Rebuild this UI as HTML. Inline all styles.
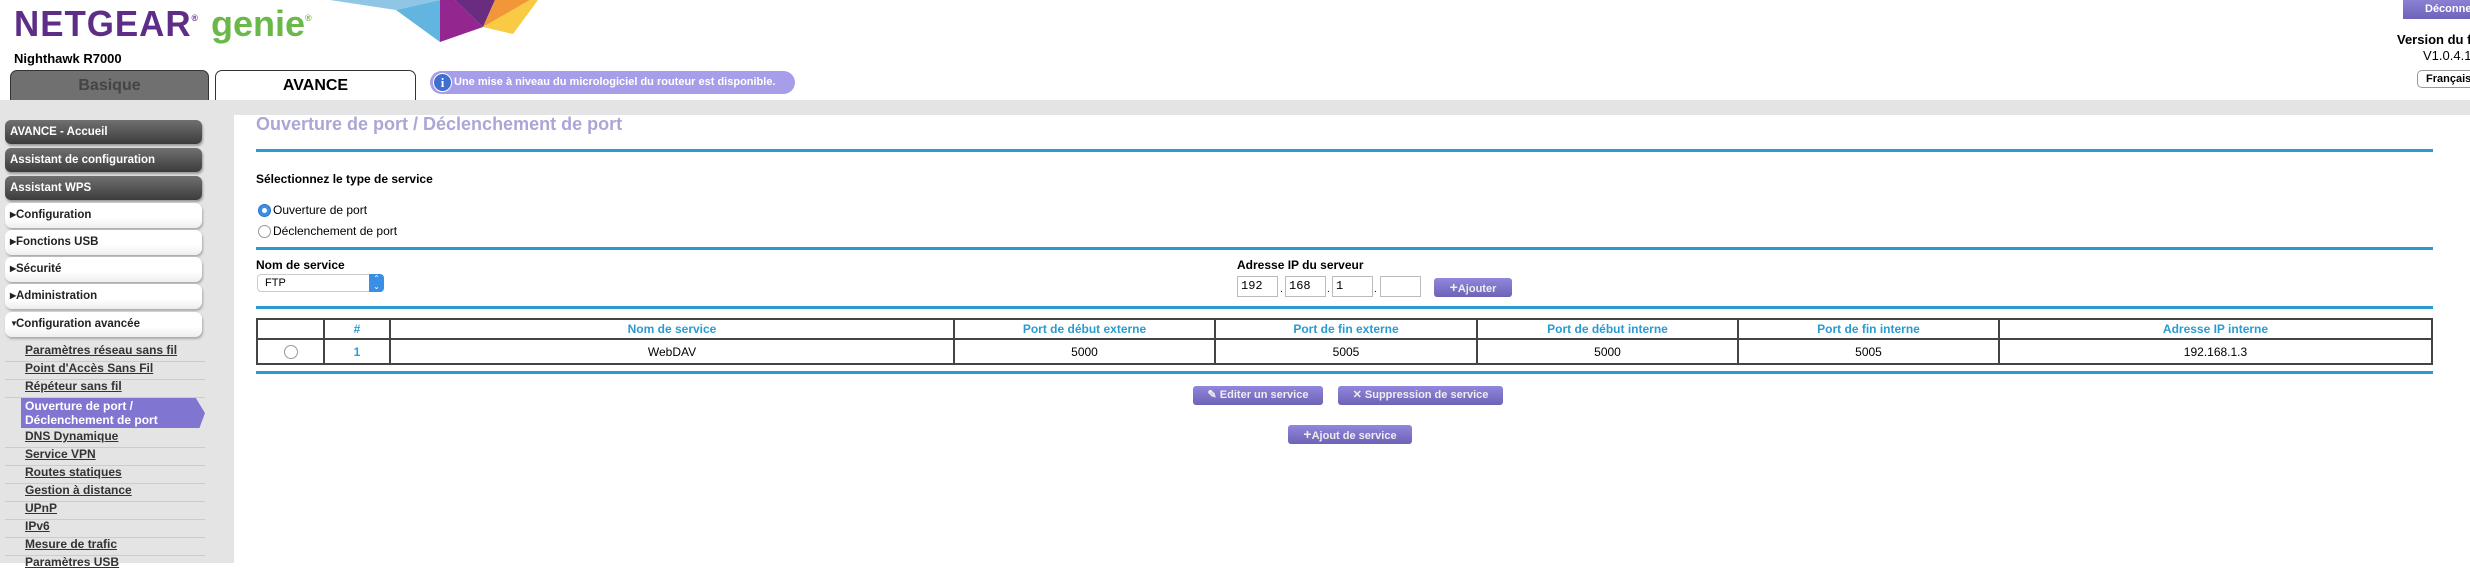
<!DOCTYPE html>
<html><head><meta charset="utf-8"><style>
*{margin:0;padding:0;box-sizing:border-box}
body{width:2470px;height:563px;overflow:hidden;background:#fff;font-family:"Liberation Sans",Arial,sans-serif;position:relative;color:#000}
.a{position:absolute;white-space:nowrap}
.tab{position:absolute;top:70px;height:31px;border:1px solid #333;border-bottom:none;border-radius:7px 7px 0 0;font-weight:bold;font-size:16px;text-align:center;line-height:30px}
.dk{position:absolute;left:5px;width:197px;height:24px;border-radius:6px;background:linear-gradient(#707070,#3c3c3c);color:#fff;font-weight:bold;font-size:11.5px;line-height:24px;padding-left:5px;box-shadow:1px 2px 2px #999}
.lt{position:absolute;left:5px;width:197px;height:25px;border-radius:7px;background:linear-gradient(#fff,#fff 60%,#eee);color:#222;font-weight:bold;font-size:11.5px;line-height:24px;padding-left:11px;box-shadow:1px 2px 2px #aaa}
.lt i{font-style:normal;font-size:8px;position:absolute;left:5px;top:0}
.sub{position:absolute;left:25px;font-size:12px;font-weight:bold;color:#333;text-decoration:underline}
.sep{position:absolute;left:5px;width:200px;height:1px;background:#ccc}
.bl{position:absolute;left:256px;width:2177px;height:3px;background:#2a9bd0}
.btn{position:absolute;height:19px;border-radius:3px;background:linear-gradient(#9187dc,#6c62b6);color:#eee;font-weight:bold;font-size:11px;text-align:center;line-height:19px}
table{position:absolute;left:256px;top:318px;border-collapse:collapse;width:2177px}
td{border:2px solid #444;text-align:center;font-size:12px}
tr.h td{color:#2a9bd0;font-weight:bold;height:20px}
tr.d td{height:25px}
.ip{position:absolute;top:276px;width:41px;height:21px;border:1px solid #bbb;font-family:"Liberation Mono",monospace;font-size:12px;line-height:19px;padding-left:3px}
</style></head><body>
<div class="a" style="left:14px;top:3px;font-size:36px;font-weight:bold;color:#5e2d87;letter-spacing:1px;transform:scaleX(0.97);transform-origin:left">NETGEAR<sup style="font-size:9px;vertical-align:top;position:relative;top:10px">®</sup></div>
<div class="a" style="left:211px;top:3px;font-size:36px;font-weight:bold;color:#6ab84a">genie<sup style="font-size:9px;vertical-align:top;position:relative;top:10px">®</sup></div>
<svg class="a" style="left:0;top:0" width="560" height="50">
<polygon points="330,0 440,0 396,10" fill="#8fc6e6"/>
<polygon points="396,10 440,0 440,42" fill="#62b5e0"/>
<polygon points="440,0 455,0 483,27 440,42" fill="#93278f"/>
<polygon points="455,0 495,0 483,27" fill="#6a2c7f"/>
<polygon points="495,0 530,0 483,27" fill="#f2963a"/>
<polygon points="483,27 513,34 538,0 530,0" fill="#f9cb45"/>
</svg>
<div class="a" style="left:14px;top:51px;font-size:13px;font-weight:bold">Nighthawk R7000</div>
<div class="tab" style="left:10px;width:199px;background:#707070;color:#444">Basique</div>
<div class="tab" style="left:215px;width:201px;background:#fff">AVANCE</div>
<div class="a" style="left:430px;top:71px;width:365px;height:23px;border-radius:12px;background:#a69ee8;color:#fff;font-size:11px;font-weight:bold;line-height:22px;padding-left:24px">Une mise à niveau du micrologiciel du routeur est disponible.</div>
<div class="a" style="left:433px;top:73px;width:19px;height:19px;border-radius:50%;background:#3f6fd0;border:1px solid #fff;color:#fff;font-weight:bold;font-size:13px;text-align:center;line-height:17px;font-family:'Liberation Serif',serif">i</div>
<div class="a" style="left:2403px;top:0;width:80px;height:19px;background:linear-gradient(#8a80d4,#6d63b8);color:#fff;font-size:11px;font-weight:bold;line-height:19px;padding-left:22px">Déconnexion</div>
<div class="a" style="left:2397px;top:32px;font-size:13px;font-weight:bold">Version du firmware</div>
<div class="a" style="left:2423px;top:48px;font-size:13px">V1.0.4.18</div>
<div class="a" style="left:2417px;top:70px;width:70px;height:18px;border:1px solid #999;border-radius:5px;font-size:11px;font-weight:bold;line-height:16px;padding-left:8px">Français</div>
<div class="a" style="left:0;top:100px;width:2470px;height:15px;background:#e4e4e4"></div>
<div class="a" style="left:0;top:115px;width:234px;height:448px;background:#e4e4e4"></div>
<div class="dk" style="top:120px">AVANCE - Accueil</div>
<div class="dk" style="top:148px">Assistant de configuration</div>
<div class="dk" style="top:176px">Assistant WPS</div>
<div class="lt" style="top:203px"><i>▶</i>Configuration</div>
<div class="lt" style="top:230px"><i>▶</i>Fonctions USB</div>
<div class="lt" style="top:257px"><i>▶</i>Sécurité</div>
<div class="lt" style="top:284px"><i>▶</i>Administration</div>
<div class="lt" style="top:312px"><i>▼</i>Configuration avancée</div>
<div class="sub" style="top:343px">Paramètres réseau sans fil</div><div class="sep" style="top:361px"></div>
<div class="sub" style="top:361px">Point d'Accès Sans Fil</div><div class="sep" style="top:379px"></div>
<div class="sub" style="top:379px">Répéteur sans fil</div><div class="sep" style="top:397px"></div>
<div class="a" style="left:21px;top:398px;width:184px;height:30px;background:#8076d1;clip-path:polygon(0 0,95% 0,100% 50%,97% 100%,0 100%)"></div>
<div class="a" style="left:25px;top:399px;font-size:12px;font-weight:bold;color:#fff;line-height:14px">Ouverture de port /<br>Déclenchement de port</div>
<div class="sub" style="top:429px">DNS Dynamique</div><div class="sep" style="top:447px"></div>
<div class="sub" style="top:447px">Service VPN</div><div class="sep" style="top:465px"></div>
<div class="sub" style="top:465px">Routes statiques</div><div class="sep" style="top:483px"></div>
<div class="sub" style="top:483px">Gestion à distance</div><div class="sep" style="top:501px"></div>
<div class="sub" style="top:501px">UPnP</div><div class="sep" style="top:519px"></div>
<div class="sub" style="top:519px">IPv6</div><div class="sep" style="top:537px"></div>
<div class="sub" style="top:537px">Mesure de trafic</div><div class="sep" style="top:555px"></div>
<div class="sub" style="top:555px">Paramètres USB</div>
<div class="a" style="left:256px;top:114px;font-size:18px;font-weight:bold;color:#aaa6d6">Ouverture de port / Déclenchement de port</div>
<div class="bl" style="top:149px"></div>
<div class="a" style="left:256px;top:172px;font-size:12px;font-weight:bold">Sélectionnez le type de service</div>
<div class="a" style="left:258px;top:204px;width:13px;height:13px;border-radius:50%;background:#3b8fe6;border:1px solid #2a74c6"><div style="margin:3px;width:5px;height:5px;border-radius:50%;background:#fff"></div></div>
<div class="a" style="left:273px;top:203px;font-size:12px">Ouverture de port</div>
<div class="a" style="left:258px;top:225px;width:13px;height:13px;border-radius:50%;border:1px solid #999"></div>
<div class="a" style="left:273px;top:224px;font-size:12px">Déclenchement de port</div>
<div class="bl" style="top:247px"></div>
<div class="a" style="left:256px;top:258px;font-size:12px;font-weight:bold">Nom de service</div>
<div class="a" style="left:257px;top:274px;width:127px;height:18px;border:1px solid #ccc;border-radius:4px;font-size:11px;line-height:16px;padding-left:7px">FTP</div>
<div class="a" style="left:369px;top:274px;width:15px;height:18px;background:#3a8ee6;border-radius:0 4px 4px 0;color:#fff;font-size:8px;text-align:center;line-height:8px;padding-top:1px">⌃<br>⌄</div>
<div class="a" style="left:1237px;top:258px;font-size:12px;font-weight:bold">Adresse IP du serveur</div>
<div class="ip" style="left:1237px">192</div><div class="a" style="left:1280px;top:284px;font-size:10px">.</div>
<div class="ip" style="left:1285px">168</div><div class="a" style="left:1327px;top:284px;font-size:10px">.</div>
<div class="ip" style="left:1332px">1</div><div class="a" style="left:1374px;top:284px;font-size:10px">.</div>
<div class="ip" style="left:1380px"></div>
<div class="btn" style="left:1434px;top:278px;width:78px"><b style="font-size:14px">+</b>Ajouter</div>
<div class="bl" style="top:306px"></div>
<table>
<colgroup><col style="width:67px"><col style="width:66px"><col style="width:564px"><col style="width:261px"><col style="width:262px"><col style="width:261px"><col style="width:261px"><col></colgroup>
<tr class="h"><td></td><td>#</td><td>Nom de service</td><td>Port de début externe</td><td>Port de fin externe</td><td>Port de début interne</td><td>Port de fin interne</td><td>Adresse IP interne</td></tr>
<tr class="d"><td><span style="display:inline-block;width:14px;height:14px;border-radius:50%;border:1px solid #999;vertical-align:middle"></span></td><td style="color:#2a9bd0;font-weight:bold">1</td><td>WebDAV</td><td>5000</td><td>5005</td><td>5000</td><td>5005</td><td>192.168.1.3</td></tr>
</table>
<div class="bl" style="top:371px"></div>
<div class="btn" style="left:1193px;top:386px;width:130px">✎ Editer un service</div>
<div class="btn" style="left:1338px;top:386px;width:165px">✕ Suppression de service</div>
<div class="btn" style="left:1288px;top:425px;width:124px"><b style="font-size:14px">+</b>Ajout de service</div>
</body></html>
